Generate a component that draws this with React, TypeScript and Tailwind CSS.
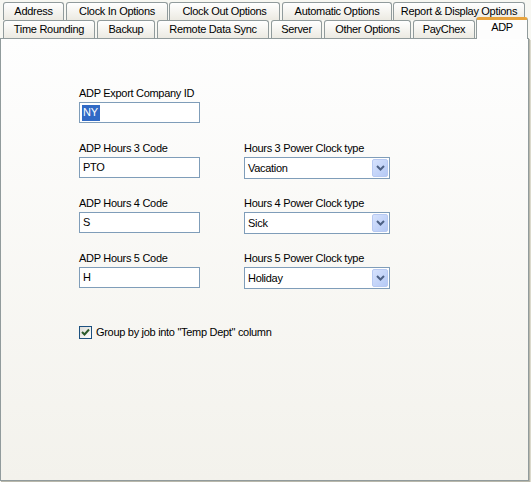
import React from 'react';

const font = { fontFamily: '"Liberation Sans", Arial, sans-serif' };

interface TabProps {
  label: string;
  className: string;
}

const Tab: React.FC<TabProps> = ({ label, className }) => (
  <div
    className={`h-[18px] flex items-center justify-center rounded-t-[3px] border border-b-0 border-[#919b9c] bg-gradient-to-b from-[#ffffff] to-[#eceae2] text-[11px] leading-[13px] text-black whitespace-nowrap ${className}`}
  >
    {label}
  </div>
);

const TextBox: React.FC<{ value: string; selected?: boolean }> = ({ value, selected }) => (
  <div className="w-[121px] h-[21px] border border-[#7f9db9] bg-white flex items-center px-[2px] text-[11px] leading-[13px]">
    {selected ? (
      <span className="bg-[#316ac5] text-white h-[16px] flex items-center pl-[1px] pr-[2px]">{value}</span>
    ) : (
      <span className="pl-[1px]">{value}</span>
    )}
  </div>
);

const Select: React.FC<{ value: string }> = ({ value }) => (
  <div className="w-[146px] h-[22px] border border-[#7f9db9] bg-white flex items-center justify-between pl-[3px] pr-[1px] text-[11px] leading-[13px]">
    <span>{value}</span>
    <div className="w-[16px] h-[18px] rounded-[2px] border border-[#b7c9f2] bg-gradient-to-br from-[#d6e2fd] to-[#b5c9f5] flex items-center justify-center">
      <svg width="9" height="6" viewBox="0 0 9 6">
        <path d="M1 1 L4.5 4.5 L8 1" fill="none" stroke="#4d6185" strokeWidth="2" />
      </svg>
    </div>
  </div>
);

const Field: React.FC<{ label: string; children: React.ReactNode }> = ({ label, children }) => (
  <div className="flex flex-col">
    <div className="h-[15px] text-[11px] leading-[13px]">{label}</div>
    {children}
  </div>
);

const rows = [
  { n: 3, code: 'PTO', type: 'Vacation' },
  { n: 4, code: 'S', type: 'Sick' },
  { n: 5, code: 'H', type: 'Holiday' },
];

export default function App() {
  return (
    <div className="w-[531px] h-[482px] bg-[#f7f7f2] text-black overflow-hidden tracking-[-0.3px]" style={font}>
      {/* Tab strip row 1 */}
      <div className="flex pt-[2px]">
        <Tab label="Address" className="ml-[3px] w-[61px]" />
        <Tab label="Clock In Options" className="ml-[2px] w-[102px]" />
        <Tab label="Clock Out Options" className="ml-[1px] w-[111px]" />
        <Tab label="Automatic Options" className="ml-[2px] w-[110px]" />
        <Tab label="Report & Display Options" className="ml-[1px] w-[132px]" />
      </div>
      {/* Tab strip row 2 */}
      <div className="flex items-end h-[18px]">
        <Tab label="Time Rounding" className="ml-[3px] w-[92px]" />
        <Tab label="Backup" className="ml-[2px] w-[58px]" />
        <Tab label="Remote Data Sync" className="ml-[2px] w-[112px]" />
        <Tab label="Server" className="ml-[2px] w-[51px]" />
        <Tab label="Other Options" className="ml-[2px] w-[87px]" />
        <Tab label="PayChex" className="ml-[2px] w-[62px]" />
        <div className="relative z-10 ml-[1px] w-[52px] h-[22px] -mb-px self-end rounded-t-[3px] border-x border-[#919b9c] border-t-[3px] border-t-[#e8a33c] bg-[#fdfdfd] flex justify-center pt-[1px] text-[11px] leading-[13px]">
          ADP
        </div>
      </div>

      {/* Page */}
      <div className="w-[529px] h-[443px] border border-[#919b9c] bg-gradient-to-b from-[#fefefe] to-[#f3f2ec] shadow-[1px_1px_0_#b9b8ab,2px_2px_0_#dcdacd] pl-[78px] pt-[48px]">
        <Field label="ADP Export Company ID">
          <TextBox value="NY" selected />
        </Field>

        <div className="flex flex-col gap-[18px] mt-[19px]">
          {rows.map((r) => (
            <div key={r.n} className="flex gap-[44px]">
              <Field label={`ADP Hours ${r.n} Code`}>
                <TextBox value={r.code} />
              </Field>
              <Field label={`Hours ${r.n} Power Clock type`}>
                <Select value={r.type} />
              </Field>
            </div>
          ))}
        </div>

        <div className="flex items-center gap-[4px] mt-[37px] text-[11px] leading-[13px]">
          <div className="w-[13px] h-[13px] border border-[#1c5180] bg-gradient-to-br from-[#dcdcd7] to-[#ffffff] flex items-center justify-center">
            <svg width="9" height="9" viewBox="0 0 9 9">
              <path d="M1 4 L3.5 6.5 L8 1.5" fill="none" stroke="#2a5a2a" strokeWidth="2" />
            </svg>
          </div>
          <span>Group by job into "Temp Dept" column</span>
        </div>
      </div>
    </div>
  );
}
